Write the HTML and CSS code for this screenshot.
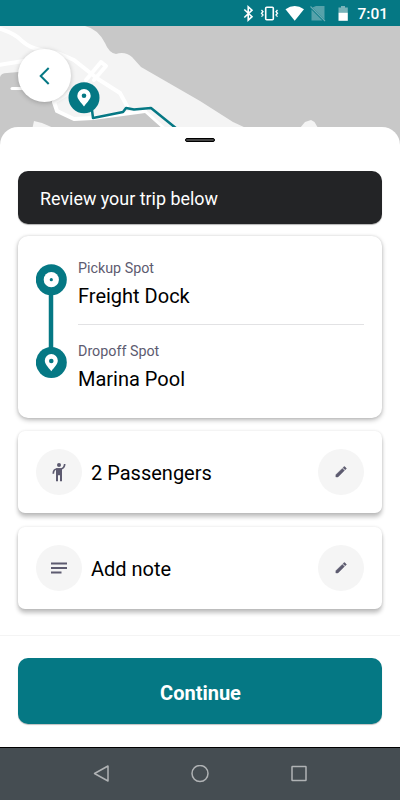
FILE: index.html
```html
<!DOCTYPE html>
<html lang="en">

<head>
    <meta charset="UTF-8">
    <meta name="viewport" content="width=device-width, initial-scale=1.0">
    <title>Review your trip</title>
    <link rel="stylesheet" href="styles.css">
</head>

<body>
    <header class="status-bar">
        <svg class="status-icons" width="108" height="26" viewBox="0 0 108 26">
            <!-- bluetooth -->
            <path d="M1.300 9.500L9 16.700L5.200 20.200V6.800L9 10.200L1.300 17.500" fill="none" stroke="#fff" stroke-width="1.600" />
            <!-- vibrate -->
            <rect x="22.700" y="7.200" width="7.600" height="12.600" rx="1" fill="none" stroke="#fff" stroke-width="1.600" />
            <path d="M18.500 10l1.500 1.700-1.500 1.600 1.500 1.700-1.500 1.600M34.500 10l-1.500 1.700 1.500 1.600-1.500 1.700 1.500 1.600" fill="none" stroke="#fff" stroke-width="1.300" />
            <!-- wifi -->
            <path d="M42.500 9.300Q51.700 2.500 61 9.300L51.700 20.800Z" fill="#fff" />
            <!-- no sim -->
            <path d="M73 6h8.500v13.500L69.500 7.500zM68.500 9.500L79.500 20.500h-11z" fill="#57a2aa" />
            <path d="M67.500 6.500l14.500 14.500" stroke="#69acb3" stroke-width="1.100" />
            <!-- battery -->
            <path d="M95.500 7.500h2.500V6h4v1.500h2.800v5.500H95.500z" fill="#78b3b9" />
            <path d="M95.500 12.800h9.300v8h-9.300z" fill="#fff" />
        </svg>
        <span class="time">7:01</span>
    </header>

    <section class="map">
        <svg class="map-canvas" width="400" height="124" viewBox="0 26 400 124">
            <rect y="26" width="400" height="124" fill="#c8c8c8" />
            <path d="M0 26H85Q98 29 105 43Q109 53 116 54Q125 51 132 57L141 67L200 101L233 122L246 128V150H0Z" fill="#f4f4f4" />
            <path d="M0 77Q1 73 7 73L30 71L55 102L57 111L74 119L94 118L146 112L166 129V150H0Z" fill="#c8c8c8" />
            <path d="M300 128L305 122L311 120L314.500 122L318 128Z" fill="#f4f4f4" />
            <path d="M32 130L34 121L42 123L56 129Z" fill="#f4f4f4" />
            <g fill="none" stroke="#fff" stroke-width="4" stroke-linejoin="round" stroke-linecap="round">
                <path d="M-2 28Q16 34 22 41Q30 48 41 50L60 54L74 60L98 79L120 93L127 106" />
                <path d="M-2 65L30 60" />
                <path d="M12 88.500H25" stroke-width="3" />
                <path d="M54 102L57 111L74 119L93 118L145 111" />
                <path d="M54 102L70 92M86 80L101 62L106 66L94 80" />
                <path d="M146 112L165 129" stroke-width="3" />
            </g>
            <path d="M92 110L93 118L123 112L126 108L134 109.500L151 108L177 129" fill="none" stroke="#057884" stroke-width="2.500" stroke-linejoin="round" />
            <circle cx="84" cy="97.700" r="15.500" fill="#057884" />
            <path d="M84 106.500C80.500 102 77.300 99 77.300 95.800A6.700 6.700 0 0 1 90.700 95.800C90.700 99 87.500 102 84 106.500Z" fill="#fff" />
            <circle cx="84" cy="95.800" r="2.300" fill="#057884" />
        </svg>
        <button class="back" aria-label="Back">
            <svg width="12" height="18" viewBox="0 0 12 18">
                <path d="M9.700 1L1.700 9L9.700 17" fill="none" stroke="#057884" stroke-width="2" />
            </svg>
        </button>
    </section>

    <main class="sheet">
        <div class="handle"></div>
        <div class="banner">Review your trip below</div>

        <div class="card trip">
            <svg class="route" width="32" height="115" viewBox="0 0 32 115">
                <path d="M15 16V98" stroke="#057884" stroke-width="4.500" />
                <circle cx="15.300" cy="15.700" r="15.500" fill="#057884" />
                <circle cx="15.300" cy="15.700" r="7.600" fill="#fff" />
                <circle cx="15.300" cy="15.700" r="1.600" fill="#057884" />
                <circle cx="15.300" cy="98.500" r="15.500" fill="#057884" />
                <path d="M15.300 107.200C11.800 102.800 8.800 99.800 8.800 96.500A6.500 6.500 0 0 1 21.800 96.500C21.800 99.800 18.800 102.800 15.300 107.200Z" fill="#fff" />
                <circle cx="15.300" cy="97" r="2.300" fill="#057884" />
            </svg>
            <div class="stops">
                <div class="stop">
                    <div class="label">Pickup Spot</div>
                    <div class="place">Freight Dock</div>
                </div>
                <div class="stop">
                    <div class="label">Dropoff Spot</div>
                    <div class="place">Marina Pool</div>
                </div>
            </div>
        </div>

        <div class="card option">
            <span class="round">
                <svg width="20" height="20" viewBox="0 0 20 20">
                    <circle cx="10" cy="3" r="2" fill="#5d5b70" />
                    <path d="M7 6.200h6v13h-2v-6h-2v6H7z" fill="#5d5b70" />
                    <path d="M4.300 11.800Q4.300 7.200 8 7H12Q15.500 6.200 15.700 2" fill="none" stroke="#5d5b70" stroke-width="1.700" />
                </svg>
            </span>
            <span class="text">2 Passengers</span>
            <button class="round" aria-label="Edit passengers">
                <svg width="12" height="12" viewBox="0 0 14 14">
                    <path d="M1 10.300L8.500 2.800L11 5.300L3.500 12.800H1zM9.300 2L10.500 .9Q11 .5 11.500 .9L13 2.400Q13.400 2.900 13 3.400L11.800 4.500z" fill="#5d5b70" stroke="#5d5b70" stroke-width=".5" />
                </svg>
            </button>
        </div>

        <div class="card option">
            <span class="round">
                <svg width="18" height="14" viewBox="0 0 18 14">
                    <path d="M1 2.500H17M1 7H17M1 11.500H11.500" stroke="#5d5b70" stroke-width="2" />
                </svg>
            </span>
            <span class="text">Add note</span>
            <button class="round" aria-label="Edit note">
                <svg width="12" height="12" viewBox="0 0 14 14">
                    <path d="M1 10.300L8.500 2.800L11 5.300L3.500 12.800H1zM9.300 2L10.500 .9Q11 .5 11.500 .9L13 2.400Q13.400 2.900 13 3.400L11.800 4.500z" fill="#5d5b70" stroke="#5d5b70" stroke-width=".5" />
                </svg>
            </button>
        </div>

        <div class="footer">
            <button class="continue">Continue</button>
        </div>
    </main>

    <nav class="nav-bar">
        <svg width="18" height="18" viewBox="0 0 18 18">
            <path d="M16 1V16L2.500 8.500Z" fill="none" stroke="#b0b3b5" stroke-width="1.500" stroke-linejoin="round" />
        </svg>
        <svg width="18" height="18" viewBox="0 0 18 18">
            <circle cx="9" cy="8.500" r="8" fill="none" stroke="#b0b3b5" stroke-width="1.500" />
        </svg>
        <svg width="18" height="18" viewBox="0 0 18 18">
            <rect x="2" y="1.500" width="14" height="14" rx=".5" fill="none" stroke="#b0b3b5" stroke-width="1.500" />
        </svg>
    </nav>
</body>

</html>
```

FILE: styles.css
```css
* {
    box-sizing: border-box;
}

body {
    margin: 0;
    width: 400px;
    height: 800px;
    overflow: hidden;
    display: flex;
    flex-direction: column;
    font-family: Roboto, sans-serif;
    background: #fff;
    color: #000;
}

svg {
    display: block;
    flex: none;
}

button {
    border: none;
    padding: 0;
    font-family: inherit;
    cursor: pointer;
}

.status-bar {
    height: 26px;
    flex: none;
    display: flex;
    align-items: center;
    justify-content: space-between;
    padding: 0 12px 0 243px;
    background: #057884;
    color: #fff;
}

.time {
    font-size: 15.5px;
    font-weight: 500;
    line-height: 26px;
    padding-top: 2px;
}

.map {
    position: relative;
    height: 124px;
    flex: none;
}

.back {
    position: absolute;
    left: 18px;
    top: 23px;
    width: 53px;
    height: 53px;
    display: flex;
    align-items: center;
    justify-content: center;
    border-radius: 50%;
    background: #fff;
    box-shadow: 0 1px 5px rgba(0, 0, 0, 0.22);
}

.sheet {
    position: relative;
    height: 620px;
    flex: none;
    margin-top: -23px;
    padding: 11px 18px 0;
    display: flex;
    flex-direction: column;
    border-radius: 18px 18px 0 0;
    background: #fff;
}

.handle {
    width: 30px;
    height: 4px;
    flex: none;
    align-self: center;
    border: 1px solid #000;
    border-radius: 2px;
    background: #444;
}

.banner {
    height: 53px;
    flex: none;
    margin-top: 29px;
    padding-left: 22px;
    line-height: 55px;
    font-size: 17.9px;
    border-radius: 10px;
    background: #232426;
    color: #fff;
    box-shadow: 0 1px 1px rgba(0, 0, 0, 0.3);
}

.card {
    flex: none;
    display: flex;
    border-radius: 7px;
    background: #fff;
    box-shadow: 0 4px 4px rgba(0, 0, 0, 0.24), 0 0 3px rgba(0, 0, 0, 0.12);
}

.trip {
    height: 182px;
    margin-top: 12px;
    padding: 28px 18px 0;
    gap: 10px;
    border-radius: 10px;
    box-shadow: 0 2px 5px rgba(0, 0, 0, 0.28), 0 0 3px rgba(0, 0, 0, 0.1);
}

.stops {
    flex: 1;
    margin-top: -6px;
}

.stop {
    height: 83px;
}

.stop:first-child {
    height: 67px;
    margin-bottom: 16px;
    border-bottom: 1px solid #e2e2e4;
}

.label {
    font-size: 14.3px;
    line-height: 20px;
    color: #5d5b70;
}

.place {
    margin-top: 5px;
    font-size: 20px;
    line-height: 26px;
}

.option {
    height: 82px;
    align-items: center;
    margin-top: 13px;
    padding: 0 18px;
    gap: 9px;
}

.option + .option {
    margin-top: 14px;
}

.round {
    width: 46px;
    height: 46px;
    flex: none;
    display: flex;
    align-items: center;
    justify-content: center;
    border-radius: 50%;
    background: #f5f5f5;
}

.text {
    flex: 1;
    padding-top: 2px;
    font-size: 20px;
}

.footer {
    height: 112px;
    margin: 26px -18px 0;
    padding: 22px 18px;
    border-top: 1px solid #f4f4f4;
}

.continue {
    display: block;
    width: 100%;
    height: 66px;
    padding: 3px 0 0 1px;
    border-radius: 10px;
    background: #057884;
    color: #fff;
    font-size: 20px;
    font-weight: 700;
    box-shadow: 0 1px 1px rgba(0, 0, 0, 0.25);
}

.nav-bar {
    height: 53px;
    flex: none;
    display: flex;
    align-items: center;
    justify-content: center;
    gap: 81px;
    border-top: 1px solid #000;
    background: #454d52;
}
```
